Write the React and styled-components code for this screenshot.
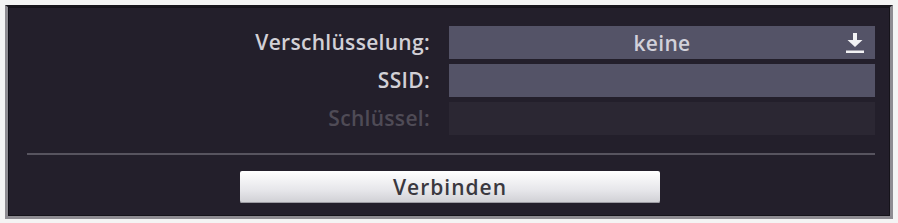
import React from "react";
import styled, { createGlobalStyle } from "styled-components";

const GlobalStyle = createGlobalStyle`
  html, body {
    margin: 0;
    padding: 0;
    background: #f4f4f4;
  }
  body {
    font-family: "Open Sans", "DejaVu Sans", sans-serif;
  }
`;

const Page = styled.div`
  width: 898px;
  height: 223px;
  padding: 5px 5px 4px 5px;
  box-sizing: border-box;
`;

const Frame = styled.div`
  height: 100%;
  box-sizing: border-box;
  background: #231f2b;
  border: 3px solid #8e8c92;
  border-top: 2px solid #18161d;
  box-shadow: inset 1px 1px 0 #15131a, inset -1px -1px 0 #15131a;
  padding: 19px 15px 13px 0;
  display: flex;
  flex-direction: column;
`;

const Form = styled.div`
  display: grid;
  grid-template-columns: 1fr 426px;
  column-gap: 19px;
  row-gap: 5px;
`;

const Label = styled.div`
  text-align: right;
  font-size: 21px;
  font-weight: 600;
  letter-spacing: 0.3px;
  color: ${(p) => (p.$disabled ? "#4f4b56" : "#d2d0d6")};
  height: 33px;
  line-height: 33px;
`;

const Field = styled.div`
  position: relative;
  height: 33px;
  background: ${(p) => (p.$disabled ? "#2b2733" : "#545367")};
  color: #d2d1da;
  font-size: 21px;
  font-weight: 600;
  letter-spacing: 0.3px;
  display: flex;
  align-items: center;
  justify-content: center;
`;

const DropIcon = styled.svg`
  position: absolute;
  right: 11px;
  top: 6px;
`;

const Divider = styled.div`
  height: 2px;
  background: #57545f;
  margin: 18px 0 0 19px;
`;

const ButtonRow = styled.div`
  display: flex;
  justify-content: center;
  margin-top: 16px;
  padding-left: 17px;
`;

const Button = styled.div`
  width: 420px;
  height: 32px;
  border-radius: 2px;
  background: linear-gradient(#ffffff, #e6e6ea 60%, #cfcfd4);
  box-shadow: inset 0 -1px 0 #9d9ca3;
  color: #3a383f;
  font-size: 21px;
  font-weight: 600;
  letter-spacing: 1px;
  display: flex;
  align-items: center;
  justify-content: center;
`;

export default function App() {
  return (
    <>
      <GlobalStyle />
      <Page>
        <Frame>
          <Form>
            <Label>Verschlüsselung:</Label>
            <Field>
              keine
              <DropIcon width="18" height="22" viewBox="0 0 18 22">
                <rect x="7" y="1" width="4" height="9" fill="#f2f2f4" />
                <polygon points="1.5,8 16.5,8 9,15" fill="#f2f2f4" />
                <rect x="0" y="18.5" width="18" height="2.5" fill="#f2f2f4" />
              </DropIcon>
            </Field>
            <Label>SSID:</Label>
            <Field />
            <Label $disabled>Schlüssel:</Label>
            <Field $disabled />
          </Form>
          <Divider />
          <ButtonRow>
            <Button>Verbinden</Button>
          </ButtonRow>
        </Frame>
      </Page>
    </>
  );
}
